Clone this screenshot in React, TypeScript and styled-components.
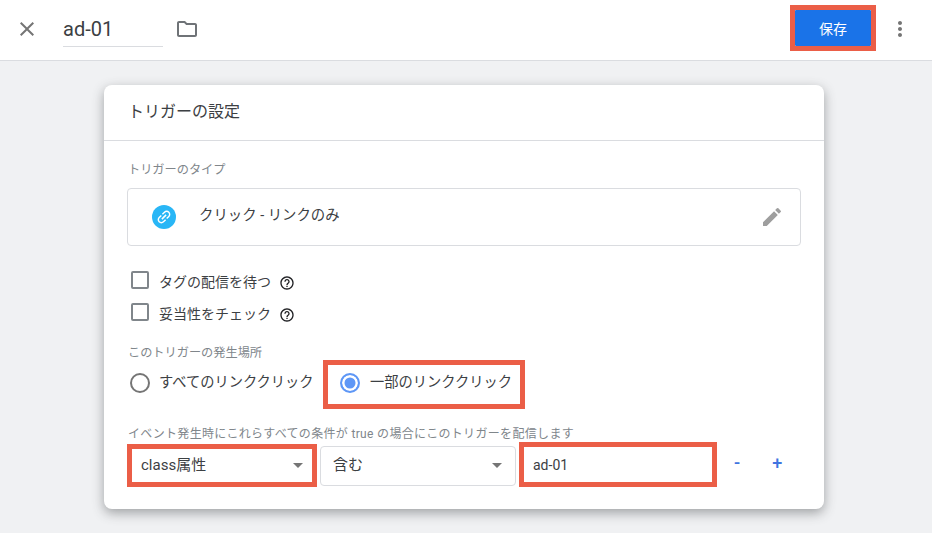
import styled, { createGlobalStyle } from "styled-components";
import { MdClose, MdEdit, MdHelpOutline, MdLink, MdMoreVert, MdOutlineFolder } from "react-icons/md";

const FONT = `Roboto, "Noto Sans CJK JP", sans-serif`;
const MARK = "#eb5e47";

function App() {
    return (
        <>
            <GlobalStyle />
            <Header>
                <CloseButton><MdClose size={24} /></CloseButton>
                <NameField>ad-01</NameField>
                <FolderButton><MdOutlineFolder size={24} /></FolderButton>
                <SaveMark>
                    <SaveButton>保存</SaveButton>
                </SaveMark>
                <MoreButton><MdMoreVert size={24} /></MoreButton>
            </Header>
            <Card>
                <CardTitle>トリガーの設定</CardTitle>
                <CardBody>
                    <FieldLabel>トリガーのタイプ</FieldLabel>
                    <TypeBox>
                        <TypeIcon><MdLink size={18} /></TypeIcon>
                        <TypeName>クリック - リンクのみ</TypeName>
                        <EditIcon><MdEdit size={24} /></EditIcon>
                    </TypeBox>
                    <CheckList>
                        <CheckRow>
                            <CheckBox />
                            <CheckText>タグの配信を待つ</CheckText>
                            <HelpIcon><MdHelpOutline size={16} /></HelpIcon>
                        </CheckRow>
                        <CheckRow>
                            <CheckBox />
                            <CheckText>妥当性をチェック</CheckText>
                            <HelpIcon><MdHelpOutline size={16} /></HelpIcon>
                        </CheckRow>
                    </CheckList>
                    <PlaceLabel>このトリガーの発生場所</PlaceLabel>
                    <RadioRow>
                        <RadioOption>
                            <Radio />
                            <RadioText>すべてのリンククリック</RadioText>
                        </RadioOption>
                        <RadioMark>
                            <Radio $checked />
                            <RadioText>一部のリンククリック</RadioText>
                        </RadioMark>
                    </RadioRow>
                    <ConditionLabel>イベント発生時にこれらすべての条件が true の場合にこのトリガーを配信します</ConditionLabel>
                    <ConditionRow>
                        <SelectBox $width={190} $marked>
                            <SelectText>class属性</SelectText>
                            <Arrow />
                        </SelectBox>
                        <SelectBox $width={196}>
                            <SelectText>含む</SelectText>
                            <Arrow />
                        </SelectBox>
                        <ValueBox>ad-01</ValueBox>
                        <RowButton $left={14}>-</RowButton>
                        <RowButton $left={29}>+</RowButton>
                    </ConditionRow>
                </CardBody>
            </Card>
        </>
    );
}

const GlobalStyle = createGlobalStyle`
    html, body {
        margin: 0;
        height: 100%;
        background: #f0f1f3;
        font-family: ${FONT};
        overflow: hidden;
    }
    * {
        box-sizing: border-box;
    }
`;

const Header = styled.header`
    display: flex;
    align-items: center;
    height: 61px;
    padding: 0 20px 3px 15px;
    background: #fff;
    border-bottom: 1px solid #dadce0;
`;

const CloseButton = styled.div`
    display: flex;
    color: #757575;
`;

const NameField = styled.div`
    align-self: flex-start;
    width: 100px;
    height: 47px;
    margin: 0 0 0 24px;
    padding-top: 15px;
    font-size: 20px;
    line-height: 28px;
    color: #3c4043;
    border-bottom: 1px solid #dadce0;
`;

const FolderButton = styled.div`
    display: flex;
    margin-left: 12px;
    color: #6f7377;
`;

const SaveMark = styled.div`
    align-self: flex-start;
    margin: 5px 0 0 auto;
    width: 86px;
    height: 46px;
    border: 5px solid ${MARK};
`;

const SaveButton = styled.div`
    display: flex;
    align-items: center;
    justify-content: center;
    height: 100%;
    background: #1a73e8;
    color: #fff;
    font-size: 14px;
    border-radius: 1px;
`;

const MoreButton = styled.div`
    display: flex;
    margin-left: 12px;
    color: #757575;
`;

const Card = styled.section`
    width: 720px;
    height: 424px;
    margin: 24px 0 0 104px;
    background: #fff;
    border-radius: 8px;
    box-shadow: 0 4px 12px rgba(60, 64, 67, 0.45);
`;

const CardTitle = styled.h1`
    height: 56px;
    margin: 0;
    padding: 15px 0 0 24px;
    font-size: 16px;
    line-height: 24px;
    font-weight: 400;
    color: #3c4043;
    border-bottom: 1px solid #dadce0;
`;

const CardBody = styled.div`
    padding: 21px 23px 0;
`;

const FieldLabel = styled.div`
    margin-left: 1px;
    font-size: 12.2px;
    line-height: 16px;
    color: #80868b;
`;

const TypeBox = styled.div`
    display: flex;
    align-items: center;
    width: 674px;
    height: 58px;
    margin-top: 10px;
    padding: 0 16px 0 24px;
    border: 1px solid #dadce0;
    border-radius: 4px;
`;

const TypeIcon = styled.div`
    display: flex;
    align-items: center;
    justify-content: center;
    width: 24px;
    height: 24px;
    border-radius: 50%;
    background: #29b6f6;
    color: #fff;
    svg {
        transform: rotate(-45deg);
    }
`;

const TypeName = styled.div`
    margin: 0 0 8px 23px;
    font-size: 14.4px;
    color: #3c4043;
`;

const EditIcon = styled.div`
    display: flex;
    margin-left: auto;
    color: #9e9e9e;
`;

const CheckList = styled.div`
    display: flex;
    flex-direction: column;
    gap: 12px;
    margin: 24px 0 0 4px;
`;

const CheckRow = styled.div`
    display: flex;
    align-items: center;
    height: 20px;
`;

const CheckBox = styled.div`
    width: 18px;
    height: 18px;
    border: 2px solid #80868b;
    border-radius: 2px;
`;

const CheckText = styled.span`
    margin: 2px 0 0 10px;
    font-size: 14px;
    color: #3c4043;
`;

const HelpIcon = styled.span`
    display: flex;
    margin: 5px 0 0 8px;
    color: #202124;
`;

const PlaceLabel = styled.div`
    margin: 23px 0 0 1px;
    font-size: 12.2px;
    line-height: 16px;
    color: #80868b;
`;

const RadioRow = styled.div`
    display: flex;
    align-items: center;
    height: 49px;
    margin-top: -1px;
`;

const RadioOption = styled.div`
    display: flex;
    align-items: center;
    gap: 9px;
    width: 193px;
    margin: 0 0 3px 3px;
`;

const RadioMark = styled.div`
    display: flex;
    align-items: center;
    gap: 10px;
    width: 202px;
    height: 49px;
    padding: 0 0 3px 12px;
    border: 5px solid ${MARK};
`;

const Radio = styled.div<{ $checked?: boolean }>`
    flex: none;
    width: 20px;
    height: 20px;
    border-radius: 50%;
    border: 2px solid ${p => (p.$checked ? "#5e97f6" : "#757575")};
    background: ${p => (p.$checked ? "#5e97f6" : "transparent")};
    box-shadow: ${p => (p.$checked ? "inset 0 0 0 2.5px #fff" : "none")};
`;

const RadioText = styled.span`
    margin-bottom: 6px;
    font-size: 14.25px;
    white-space: nowrap;
    color: #3c4043;
`;

const ConditionLabel = styled.div`
    margin: 17px 0 0 1px;
    font-size: 12px;
    line-height: 16px;
    letter-spacing: 0.33px;
    color: #80868b;
`;

const ConditionRow = styled.div`
    display: flex;
    align-items: center;
    gap: 3px;
    height: 45px;
    margin-top: 1px;
`;

const SelectBox = styled.div<{ $width: number; $marked?: boolean }>`
    display: flex;
    align-items: center;
    justify-content: space-between;
    width: ${p => p.$width}px;
    height: ${p => (p.$marked ? 43 : 40)}px;
    padding: 0 ${p => (p.$marked ? 9 : 13)}px 0 ${p => (p.$marked ? 9 : 12)}px;
    border: ${p => (p.$marked ? `5px solid ${MARK}` : "1px solid #dadce0")};
    border-radius: ${p => (p.$marked ? 0 : 4)}px;
`;

const SelectText = styled.span`
    margin-bottom: 4px;
    font-size: 15px;
    color: #3c4043;
`;

const Arrow = styled.span`
    width: 0;
    height: 0;
    border-left: 5px solid transparent;
    border-right: 5px solid transparent;
    border-top: 5px solid #757575;
`;

const ValueBox = styled.div`
    display: flex;
    align-items: center;
    width: 198px;
    height: 45px;
    margin-top: -2px;
    padding-left: 9px;
    border: 5px solid ${MARK};
    font-size: 14px;
    color: #3c4043;
`;

const RowButton = styled.span<{ $left: number }>`
    margin: 0 0 6px ${p => p.$left}px;
    font-size: 18px;
    font-weight: 500;
    line-height: 24px;
    color: #3f74e0;
`;

export default App;
